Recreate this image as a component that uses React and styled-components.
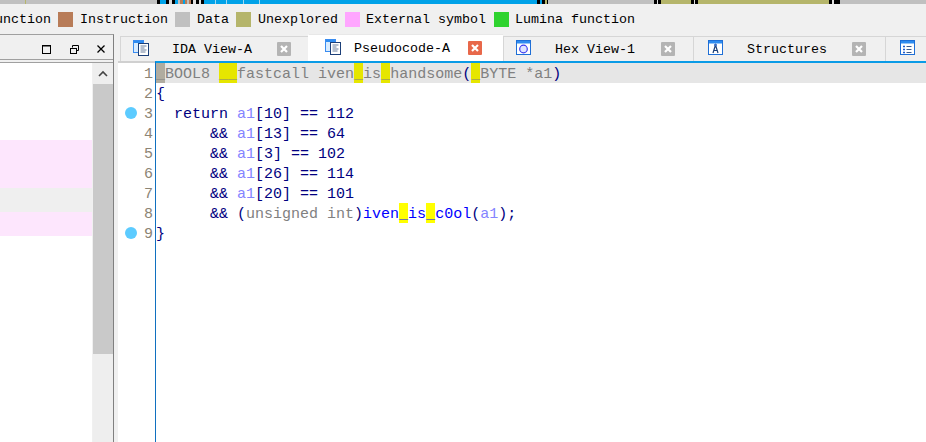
import React from 'react';
import styled, { createGlobalStyle } from 'styled-components';

const MONO = '"Liberation Mono", "DejaVu Sans Mono", monospace';

const GlobalStyle = createGlobalStyle`
  html, body {
    margin: 0;
    padding: 0;
    background: #f0f0f0;
  }
`;

const Page = styled.div`
  display: flex;
  flex-direction: column;
  width: 926px;
  height: 442px;
  overflow: hidden;
  background: #f0f0f0;
  font-family: ${MONO};
`;

const NavBand = styled.div`
  display: flex;
  flex: none;
  height: 4px;
`;

const NavPiece = styled.div`
  flex: none;
  width: ${props => props.$w}px;
  background: ${props => props.$c};
`;

const Legend = styled.div`
  display: flex;
  flex: none;
  align-items: center;
  height: 30px;
  padding-top: 1px;
  box-sizing: border-box;
  margin-left: -13px;
  font-size: 13.33px;
  color: #000;
  white-space: nowrap;
`;

const Swatch = styled.span`
  flex: none;
  width: 15px;
  height: 15px;
  margin: 0 ${props => props.$after}px 0 ${props => props.$before}px;
  background: ${props => props.$color};
`;

const Main = styled.div`
  display: flex;
  flex: 1;
  min-height: 0;
`;

const SidePanel = styled.div`
  display: flex;
  flex: none;
  flex-direction: column;
  width: 113px;
  border-top: 1px solid #a0a0a0;
  border-right: 1px solid #808080;
`;

const SideHeader = styled.div`
  display: flex;
  flex: none;
  align-items: center;
  justify-content: flex-end;
  gap: 18px;
  box-sizing: border-box;
  height: 25px;
  padding: 4px 8px 0 0;
  border-bottom: 1px solid #a0a0a0;
`;

const SideBody = styled.div`
  display: flex;
  flex: 1;
  min-height: 0;
  margin-top: 2px;
  border-top: 1px solid #a0a0a0;
`;

const SideRows = styled.div`
  flex: 1;
  padding-top: 77px;
  background: #fff;
`;

const SideRow = styled.div`
  height: ${props => props.$h}px;
  background: ${props => props.$bg};
`;

const ScrollBar = styled.div`
  display: flex;
  flex: none;
  flex-direction: column;
  width: 20px;
  margin-left: 1px;
  background: #eeeeee;
`;

const ScrollButton = styled.div`
  display: flex;
  flex: none;
  align-items: center;
  justify-content: center;
  height: 21px;
`;

const ScrollThumb = styled.div`
  flex: none;
  height: 270px;
  background: #c9c9c9;
`;

const Workspace = styled.div`
  display: flex;
  flex: 1;
  flex-direction: column;
  min-width: 0;
  margin-left: 4px;
`;

const TabStrip = styled.div`
  display: flex;
  flex: none;
  align-items: flex-end;
  height: 27px;
  padding-left: 2px;
  overflow: hidden;
`;

const Tab = styled.div`
  display: flex;
  flex: none;
  align-items: center;
  box-sizing: border-box;
  width: ${props => props.$w}px;
  height: ${props => (props.$active ? 27 : 25)}px;
  padding-left: ${props => props.$pad}px;
  padding-right: ${props => props.$end}px;
  background: ${props => (props.$active ? '#ffffff' : '#f0f0f0')};
  border-top: 1px solid ${props => (props.$active ? '#e8e8e8' : '#d6d6d6')};
  border-left: 1px solid ${props => (props.$active ? '#ffffff' : '#d6d6d6')};

  & > svg {
    margin-top: -2px;
  }
`;

const TabLabel = styled.span`
  flex: 1;
  margin-left: ${props => props.$gap}px;
  padding-top: 1px;
  font-size: 13.33px;
  color: #000;
  white-space: nowrap;
`;

const CloseBox = styled.span`
  display: flex;
  flex: none;
  align-items: center;
  justify-content: center;
  width: 14px;
  height: 14px;
  border-radius: 1px;
  background: ${props => (props.$active ? '#e8684a' : '#b4b4b4')};
`;

const Editor = styled.div`
  display: flex;
  flex: 1;
  min-height: 0;
  background: #fff;
`;

const Gutter = styled.div`
  flex: none;
  box-sizing: border-box;
  width: 37px;
  border-top: 2px solid #d0d0d0;
`;

const LineNumber = styled.div`
  position: relative;
  height: 20px;
  padding-right: 2px;
  font-size: 15px;
  line-height: 24px;
  text-align: right;
  color: #8c8474;
`;

const Breakpoint = styled.span`
  position: absolute;
  top: 4px;
  left: 7px;
  width: 12px;
  height: 12px;
  border-radius: 50%;
  background: #5ccbff;
`;

const Code = styled.div`
  flex: 1;
  min-width: 0;
  border-top: 2px solid #0a9be6;
  border-left: 1px solid #1070c0;
`;

const CodeLine = styled.div`
  height: 20px;
  font-size: 15px;
  line-height: 24px;
  white-space: pre;
  color: #000080;
  background: ${props => (props.$current ? '#e6e6e6' : 'transparent')};
`;

const Gray = styled.span`
  color: #808080;
`;

const Arg = styled.span`
  color: #8484ff;
`;

const Fn = styled.span`
  color: #0000ff;
`;

const Mark = styled.span`
  display: inline-block;
  height: 20px;
  vertical-align: top;
  color: ${props => props.$color || '#000080'};
  background: ${props => props.$bg};
`;

// segments of the navigation band along the top, left to right
const navPieces = [
  [25, '#c0c0c0'], [1, '#b5b56b'], [131, '#c0c0c0'], [3, '#000'], [6, '#00a2e8'], [3, '#000'],
  [3, '#d8d8d8'], [3, '#000'], [3, '#00a2e8'], [2, '#c0c0c0'], [3, '#b87c58'], [2, '#00a2e8'],
  [2, '#b87c58'], [2, '#c0c0c0'], [2, '#b87c58'], [2, '#000'], [3, '#e0e0e0'], [3, '#000'],
  [2, '#e0e0e0'], [3, '#000'], [11, '#00a2e8'], [1, '#a0d8f0'], [10, '#00a2e8'], [1, '#a0d8f0'],
  [16, '#00a2e8'], [1, '#a0d8f0'], [15, '#00a2e8'], [1, '#a0d8f0'], [277, '#00a2e8'], [3, '#000'],
  [2, '#00a2e8'], [3, '#000'], [2, '#b5b56b'], [1, '#000'], [2, '#c0c0c0'], [104, '#c0c0c0'],
  [3, '#000'], [1, '#e0e0e0'], [3, '#000'], [30, '#b5b56b'], [3, '#000'], [1, '#e0e0e0'],
  [3, '#000'], [131, '#b5b56b'], [3, '#000'], [2, '#e0e0e0'], [3, '#000'], [3, '#000'], [86, '#c0c0c0'],
];

const legend = [
  { label: 'function' },
  { color: '#b87c58', label: 'Instruction', before: 7, after: 7 },
  { color: '#c0c0c0', label: 'Data', before: 7, after: 7 },
  { color: '#b5b56b', label: 'Unexplored', before: 7, after: 7 },
  { color: '#ffa6ff', label: 'External symbol', before: 7, after: 6 },
  { color: '#2fd32f', label: 'Lumina function', before: 8, after: 6 },
];

const FRAME = '#1f6fd6';

const WindowBack = () => (
  <>
    <rect x="0.5" y="0.5" width="14" height="14" fill="#fff" stroke={FRAME} />
    <rect x="1" y="1" width="13" height="2.5" fill="#2e8cf0" />
  </>
);

const IconDoc = () => (
  <svg width="16" height="16" viewBox="0 0 16 16">
    <rect x="0.5" y="0.5" width="10" height="12" fill="#d8ecff" stroke="#3a8cf0" />
    <rect x="1" y="1" width="9" height="2" fill="#2e8cf0" />
    <rect x="5.5" y="3.5" width="10" height="12" fill="#fff" stroke="#1c3f78" />
    <path d="M7.5 6h6M7.5 8h4M7.5 10h6M7.5 12h5" stroke="#6a7f9c" strokeWidth="1" />
  </svg>
);

const IconCircle = () => (
  <svg width="16" height="16" viewBox="0 0 16 16">
    <WindowBack />
    <circle cx="7.5" cy="9" r="3.8" fill="#dfe4ff" stroke="#3c3cf0" strokeWidth="1.2" />
  </svg>
);

const IconStruct = () => (
  <svg width="16" height="16" viewBox="0 0 16 16">
    <WindowBack />
    <path d="M5 13L7.5 5L10 13M5.8 10.5h3.4" fill="none" stroke="#1c3f78" strokeWidth="1.2" />
    <rect x="6.2" y="4" width="2.6" height="2.2" fill="#3c6cc0" />
  </svg>
);

const IconList = () => (
  <svg width="16" height="16" viewBox="0 0 16 16">
    <WindowBack />
    <path d="M3 6.5h2M3 9.5h2M3 12.5h2" stroke="#1c5cd0" strokeWidth="1.6" />
    <path d="M6.5 6.5h5M6.5 9.5h5M6.5 12.5h5" stroke="#3c5c90" strokeWidth="1" />
  </svg>
);

const CloseGlyph = () => (
  <svg width="10" height="10" viewBox="0 0 10 10">
    <path d="M2 2L8 8M8 2L2 8" stroke="#fff" strokeWidth="2.2" />
  </svg>
);

const tabs = [
  { label: 'IDA View-A', Icon: IconDoc, w: 188, pad: 12, gap: 23, end: 17 },
  { label: 'Pseudocode-A', Icon: IconDoc, w: 195, pad: 16, gap: 13, end: 21, active: true },
  { label: 'Hex View-1', Icon: IconCircle, w: 190, pad: 12, gap: 23, end: 18 },
  { label: 'Structures', Icon: IconStruct, w: 192, pad: 14, gap: 23, end: 19 },
  { label: '', Icon: IconList, w: 60, pad: 14, gap: 0, end: 0, bare: true },
];

const Yellow = ({ children }) => <Mark $bg="#e6e600" $color="#808080">{children}</Mark>;
const Bright = ({ children }) => <Mark $bg="#ffff00" $color="#0000ff">{children}</Mark>;

const A1 = () => <Arg>a1</Arg>;

const codeLines = [
  <>
    <Mark $bg="#b0aca0" $color="#808080">_</Mark>
    <Gray>BOOL8 </Gray>
    <Yellow>__</Yellow>
    <Gray>fastcall iven</Gray>
    <Yellow>_</Yellow>
    <Gray>is</Gray>
    <Yellow>_</Yellow>
    <Gray>handsome</Gray>
    (
    <Yellow>_</Yellow>
    <Gray>BYTE *a1</Gray>
    )
  </>,
  '{',
  <>  return <A1 />[10] == 112</>,
  <>      && <A1 />[13] == 64</>,
  <>      && <A1 />[3] == 102</>,
  <>      && <A1 />[26] == 114</>,
  <>      && <A1 />[20] == 101</>,
  <>
    {'      && ('}
    <Gray>unsigned int</Gray>
    )
    <Fn>iven</Fn>
    <Bright>_</Bright>
    <Fn>is</Fn>
    <Bright>_</Bright>
    <Fn>c0ol</Fn>
    (<A1 />);
  </>,
  '}',
];

const breakpoints = [3, 9];

export default function App() {
  return (
    <Page>
      <GlobalStyle />
      <NavBand>
        {navPieces.map(([w, c], i) => (
          <NavPiece key={i} $w={w} $c={c} />
        ))}
      </NavBand>
      <Legend>
        {legend.map(({ color, label, before, after }) => (
          <React.Fragment key={label}>
            {color && <Swatch $color={color} $before={before} $after={after} />}
            <span>{label}</span>
          </React.Fragment>
        ))}
      </Legend>
      <Main>
        <SidePanel>
          <SideHeader>
            <svg width="10" height="9" viewBox="0 0 10 9">
              <rect x="0.5" y="0.5" width="8" height="8" fill="none" stroke="#000" />
              <path d="M0 1h9" stroke="#000" />
            </svg>
            <svg width="9" height="9" viewBox="0 0 9 9">
              <path d="M2.5 2.5V0.5H8.5V5.5H6.5" fill="none" stroke="#000" />
              <rect x="0.5" y="3.5" width="6" height="5" fill="none" stroke="#000" />
            </svg>
            <svg width="8" height="8" viewBox="0 0 8 8">
              <path d="M0.5 0.5L7.5 7.5M7.5 0.5L0.5 7.5" stroke="#000" strokeWidth="1.3" />
            </svg>
          </SideHeader>
          <SideBody>
            <SideRows>
              <SideRow $h={48} $bg="#fde6fd" />
              <SideRow $h={24} $bg="#efefef" />
              <SideRow $h={24} $bg="#fde6fd" />
            </SideRows>
            <ScrollBar>
              <ScrollButton>
                <svg width="10" height="7" viewBox="0 0 10 7">
                  <path d="M1 6L5 2L9 6" fill="none" stroke="#444" strokeWidth="1.6" />
                </svg>
              </ScrollButton>
              <ScrollThumb />
            </ScrollBar>
          </SideBody>
        </SidePanel>
        <Workspace>
          <TabStrip>
            {tabs.map(({ label, Icon, w, pad, gap, end, active, bare }, i) => (
              <Tab key={i} $w={w} $pad={pad} $end={end} $active={active}>
                <Icon />
                <TabLabel $gap={gap}>{label}</TabLabel>
                {!bare && (
                  <CloseBox $active={active}>
                    <CloseGlyph />
                  </CloseBox>
                )}
              </Tab>
            ))}
          </TabStrip>
          <Editor>
            <Gutter>
              {codeLines.map((_, i) => (
                <LineNumber key={i}>
                  {breakpoints.includes(i + 1) && <Breakpoint />}
                  {i + 1}
                </LineNumber>
              ))}
            </Gutter>
            <Code>
              {codeLines.map((line, i) => (
                <CodeLine key={i} $current={i === 0}>
                  {line}
                </CodeLine>
              ))}
            </Code>
          </Editor>
        </Workspace>
      </Main>
    </Page>
  );
}
